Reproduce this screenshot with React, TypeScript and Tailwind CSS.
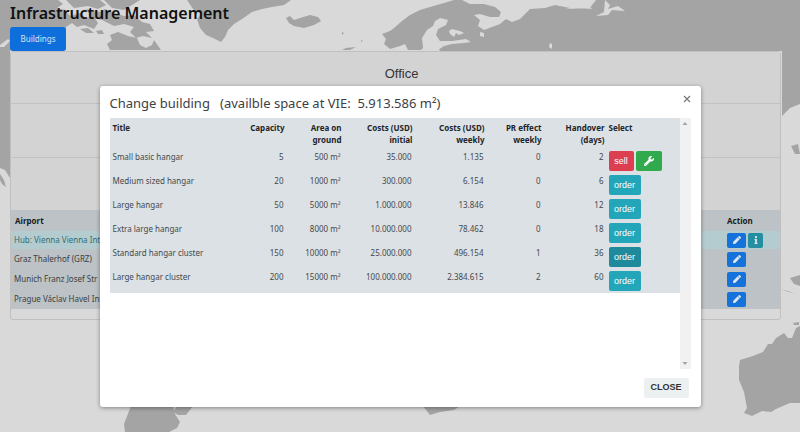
import type { ReactNode } from "react";

const airports = [
  { name: "Hub: Vienna Vienna Int", hub: true },
  { name: "Graz Thalerhof (GRZ)", hub: false },
  { name: "Munich Franz Josef Str", hub: false },
  { name: "Prague Václav Havel Int", hub: false },
];

const buildings = [
  { title: "Small basic hangar", capacity: "5", area: "500", initial: "35.000", weekly: "1.135", pr: "0", days: "2" },
  { title: "Medium sized hangar", capacity: "20", area: "1000", initial: "300.000", weekly: "6.154", pr: "0", days: "6" },
  { title: "Large hangar", capacity: "50", area: "5000", initial: "1.000.000", weekly: "13.846", pr: "0", days: "12" },
  { title: "Extra large hangar", capacity: "100", area: "8000", initial: "10.000.000", weekly: "78.462", pr: "0", days: "18" },
  { title: "Standard hangar cluster", capacity: "150", area: "10000", initial: "25.000.000", weekly: "496.154", pr: "1", days: "36" },
  { title: "Large hangar cluster", capacity: "200", area: "15000", initial: "100.000.000", weekly: "2.384.615", pr: "2", days: "60" },
];

const LAND = [
  // North America and the Arctic islands
  "M0 0H58L63 4L57 8L65 10L70 16L80 13L86 18L94 17L98 23L94 29L84 25L77 27L72 23L66 27V50H10V178L5 170L0 168Z",
  "M66 0H100L106 5L98 9L88 6L74 8Z",
  "M104 0H140L132 5L124 10L112 8Z",
  "M86 9L100 12L105 9L112 12L124 16L134 15L142 22L150 24L154 31L146 32L152 38L143 36L136 38L130 32L134 27L124 24L114 26L102 20L92 18Z",
  "M107 44L112 40L110 35L118 32L128 36L137 38L140 45L146 48L152 45L154 40L161 50H110Z",
  "M80 29L88 28L94 33L86 33Z",
  "M96 31L102 30L104 34L98 34Z",
  "M0 174L4 180L6 187L2 184L0 180Z",
  // Greenland
  "M187 0H291L284 5L272 7L262 9L252 12L242 19L234 24L228 30L225 37L221 42L213 38L206 35L200 28L197 19L201 14L193 9Z",
  // Iceland
  "M286 18L290 16L294 20L300 18L310 15L318 17L321 21L314 25L304 28L294 26L289 23Z",
  "M342 50L346 48L356 47L350 50Z",
  "M361 40L363 41L361 42Z",
  "M342 32L344 33L342 35Z",
  // Scandinavia and Russia
  "M382 34L390 31L394 28L402 21L410 15L420 10L430 7L444 3L454 0H462L470 4L484 4L495 7L501 12L499 17L490 17L480 14L474 15L480 20L478 26L484 30L492 27L500 24L506 19L512 22L520 19L530 9L545 8L555 5L570 8L566 9L590 8L592 5L596 0H800V104L790 108L782 116V51H440L437 46L426 45L421 50H408L405 44L400 46L390 49L384 44L386 39Z",
  // Southern Africa
  "M131 406L124 424L125 432H169L177 428L180 422L175 414L173 406Z",
  "M173 412L177 406H193L186 415L178 415Z",
  // South coast
  "M423 406L430 415L440 412L454 410L460 406Z",
  // Islands on the east edge
  "M791 146L798 144L800 154L795 154Z",
  "M790 278L800 275V286L794 284Z",
  "M793 323L799 322V325H794Z",
  "M780 289L788 291L795 294Z",
  // Australia
  "M739 366L740 360L753 356L763 352L768 344L772 344L776 338L784 333L788 338L792 338L796 328L800 326V403L790 403L776 409L771 412L762 411L752 416L744 413L747 408L744 392L739 380Z",
];

const WATER = [
  "M423 47L422 38L427 30L433 26L435 21L440 18L448 20L446 25L438 29L436 35L440 41L452 41L466 39L471 42L464 43L452 44L444 46L438 50H424Z",
  "M449 31L452 29L460 31L464 33L459 35L456 33L454 37L450 34Z",
  "M480 32L484 33L484 37L480 36Z",
  "M556 0L562 4L572 4L580 2L588 5L592 9L580 8L570 5Z",
  "M605 0L610 5L608 9L618 6L625 11L612 10L608 15L596 16L604 12Z",
  "M550 43L552 44L552 49L549 47Z",
  "M0 45L8 39L10 41L4 47H0Z",
];

function WorldMap() {
  return (
    <svg
      className="absolute inset-0 h-full w-full"
      viewBox="0 0 800 432"
      preserveAspectRatio="xMidYMid slice"
      aria-hidden="true"
    >
      <g fill="#a4a4a4">
        {LAND.map((d) => (
          <path key={d} d={d} />
        ))}
      </g>
      <g fill="#d9d9d9">
        {WATER.map((d) => (
          <path key={d} d={d} />
        ))}
      </g>
    </svg>
  );
}

function Pencil() {
  return (
    <svg viewBox="0 0 512 512" className="size-2" fill="currentColor" aria-hidden="true">
      <path d="M497.900 142.100l-46.100 46.100c-4.700 4.700-12.300 4.700-17 0l-111-111c-4.700-4.700-4.700-12.300 0-17l46.100-46.100c18.700-18.700 49.100-18.700 67.900 0l60.100 60.100c18.800 18.700 18.800 49.100 0 67.900zM284.200 99.800L21.600 362.400.4 483.900c-2.900 16.400 11.400 30.600 27.800 27.800l121.500-21.300 262.600-262.600c4.700-4.700 4.700-12.300 0-17l-111-111c-4.800-4.700-12.400-4.700-17.100 0z" />
    </svg>
  );
}

function Info() {
  return (
    <svg viewBox="0 0 192 512" className="h-2 w-1" fill="currentColor" aria-hidden="true">
      <path d="M20 424.229h20V279.771H20c-11.046 0-20-8.954-20-20V212c0-11.046 8.954-20 20-20h112c11.046 0 20 8.954 20 20v212.229h20c11.046 0 20 8.954 20 20V492c0 11.046-8.954 20-20 20H20c-11.046 0-20-8.954-20-20v-47.771c0-11.046 8.954-20 20-20zM96 0C56.235 0 24 32.235 24 72s32.235 72 72 72 72-32.235 72-72S135.764 0 96 0z" />
    </svg>
  );
}

function Wrench() {
  return (
    <svg viewBox="0 0 512 512" className="size-[10px]" fill="currentColor" aria-hidden="true">
      <path d="M507.730 109.100c-2.240-9.030-13.540-12.090-20.120-5.510l-74.360 74.360-67.880-11.310-11.310-67.880 74.360-74.360c6.620-6.620 3.430-17.900-5.660-20.160-47.380-11.740-99.550.91-136.580 37.930-39.640 39.640-50.550 97.100-34.050 147.200L18.740 402.760c-24.990 24.990-24.990 65.510 0 90.500 24.990 24.990 65.510 24.990 90.500 0l213.210-213.210c50.120 16.710 107.470 5.680 147.370-34.220 37.070-37.070 49.700-89.320 37.910-136.730zM64 472c-13.250 0-24-10.750-24-24 0-13.260 10.750-24 24-24s24 10.740 24 24c0 13.250-10.750 24-24 24z" />
    </svg>
  );
}

function Head({ children, className }: { children: ReactNode; className: string }) {
  return (
    <th scope="col" className={`pt-1 pr-[2px] align-top font-bold text-[#212529] ${className}`}>
      {children}
    </th>
  );
}

function BuildingTable() {
  const cell = "pt-[2px] pr-[3px] text-right align-top";
  return (
    <table className="w-full table-fixed border-collapse bg-[#dce1e5] text-[8px] leading-3 text-[#44494d]">
      <thead>
        <tr className="h-[31px]">
          <Head className="pl-[3px] text-left">Title</Head>
          <Head className="w-[45px] text-right">Capacity</Head>
          <Head className="w-[57px] text-right">
            Area on
            <br />
            ground
          </Head>
          <Head className="w-[71px] text-right">
            Costs (USD)
            <br />
            initial
          </Head>
          <Head className="w-[72px] text-right">
            Costs (USD)
            <br />
            weekly
          </Head>
          <Head className="w-[57px] text-right">
            PR effect
            <br />
            weekly
          </Head>
          <Head className="w-[63px] text-right">
            Handover
            <br />
            (days)
          </Head>
          <Head className="w-[73px] pl-[2px] text-left">Select</Head>
        </tr>
      </thead>
      <tbody>
        {buildings.map((b, i) => (
          <tr key={b.title} className="h-6">
            <td className="pt-[2px] pl-[3px] align-top">{b.title}</td>
            <td className={cell}>{b.capacity}</td>
            <td className={cell}>{b.area} m²</td>
            <td className={cell}>{b.initial}</td>
            <td className={cell}>{b.weekly}</td>
            <td className={cell}>{b.pr}</td>
            <td className={cell}>{b.days}</td>
            <td className="pt-[2px] pl-[2px] align-top">
              <div className="flex gap-[2px] font-['Liberation_Sans',sans-serif] text-[9px] text-white">
                {i === 0 ? (
                  <>
                    <button type="button" className="h-5 w-[25px] rounded-[2px] bg-[#dc3f50]">
                      sell
                    </button>
                    <button
                      type="button"
                      aria-label="Renovate"
                      className="flex h-5 w-[26px] items-center justify-center rounded-[2px] bg-[#30aa4c]"
                    >
                      <Wrench />
                    </button>
                  </>
                ) : (
                  <button
                    type="button"
                    className={`h-5 w-8 rounded-[2px] ${i === 4 ? "bg-[#1f8a9b]" : "bg-[#23a5ba]"}`}
                  >
                    order
                  </button>
                )}
              </div>
            </td>
          </tr>
        ))}
      </tbody>
    </table>
  );
}

function Dialog() {
  return (
    <div className="absolute inset-0 flex items-start justify-center pt-[86px]">
      <section
        role="dialog"
        aria-labelledby="dialog-title"
        className="w-full max-w-[601px] rounded-[3px] bg-white px-[10px] pt-2 pb-[9px] shadow-[0_1px_4px_rgba(0,0,0,0.4)]"
      >
        <header className="flex h-6 items-start justify-between">
          <h2 id="dialog-title" className="text-[13px] leading-[18px] whitespace-pre text-[#3d4145]">
            {"Change building   (availble space at VIE:  5.913.586 m²)"}
          </h2>
          <button type="button" aria-label="Close dialog" className="py-[1px] text-[#777]">
            <svg viewBox="0 0 8 8" className="size-2" stroke="currentColor" strokeWidth="1.2" aria-hidden="true">
              <path d="M1 1L7 7M7 1L1 7" />
            </svg>
          </button>
        </header>
        <div className="flex h-[251px]">
          <div className="min-w-0 flex-1 overflow-hidden">
            <BuildingTable />
          </div>
          <div className="flex w-[11px] flex-col items-center justify-between bg-[#f1f1f1] py-1" aria-hidden="true">
            <svg viewBox="0 0 6 4" className="h-1 w-[6px]" fill="#a3a3a3">
              <path d="M3 0L5.500 3H0.500Z" />
            </svg>
            <svg viewBox="0 0 6 4" className="h-1 w-[6px]" fill="#a3a3a3">
              <path d="M3 4L5.500 1H0.500Z" />
            </svg>
          </div>
        </div>
        <footer className="flex justify-end pt-[9px] pr-[2px]">
          <button
            type="button"
            className="h-5 w-[45px] rounded-[2px] bg-[#ecf0f1] font-['Liberation_Sans',sans-serif] text-[9px] font-bold text-[#333]"
          >
            CLOSE
          </button>
        </footer>
      </section>
    </div>
  );
}

export default function App() {
  return (
    <div className="relative min-h-screen overflow-hidden bg-[#d9d9d9] font-['Noto_Sans','Open_Sans',sans-serif] text-[#111]">
      <WorldMap />
      <main className="relative pr-[19px] pl-[10px]">
        <h1 className="h-[27px] text-[16px] leading-[27px] font-semibold">Infrastructure Management</h1>
        <nav className="flex">
          <button type="button" className="h-6 w-14 rounded-[3px] bg-[#0e6fdc] text-[8px] text-[#d8e5f4]">
            Buildings
          </button>
        </nav>
        <div className="rounded-[3px] border border-[#c0c0c0] bg-[#d9d9d9]">
          <div className="bg-[#d3d3d3]">
            <h2 className="h-[52px] border-b border-[#c2c2c2] pl-3 text-center font-['Liberation_Sans',sans-serif] text-[13px] leading-[44px] text-[#333]">
              Office
            </h2>
            <div className="h-[54px] border-b border-[#c2c2c2]" />
            <div className="h-[52px]" />
          </div>
          <table className="w-full table-fixed border-collapse bg-[#bcc2c5] text-[8px] leading-3 text-[#3b3f42]">
            <thead>
              <tr className="h-[21px] text-left text-[#191b1d]">
                <th scope="col" className="px-1 font-bold">Airport</th>
                <th scope="col" className="w-[53px] font-bold">Action</th>
              </tr>
            </thead>
            <tbody>
              {airports.map((a) => (
                <tr key={a.name} className={a.hub ? "h-[18px] bg-[#b4ccd0] text-[#316c70]" : "h-5"}>
                  <td className="px-[3px] whitespace-nowrap">{a.name}</td>
                  <td>
                    <div className="flex gap-[2px]">
                      <button
                        type="button"
                        aria-label="Edit"
                        className="flex h-[15px] w-[19px] items-center justify-center rounded-[2px] bg-[#1672db] text-[#e1e6ec]"
                      >
                        <Pencil />
                      </button>
                      {a.hub && (
                        <button
                          type="button"
                          aria-label="Details"
                          className="flex h-[15px] w-[15px] items-center justify-center rounded-[2px] bg-[#238fa0] text-[#e1e6ec]"
                        >
                          <Info />
                        </button>
                      )}
                    </div>
                  </td>
                </tr>
              ))}
            </tbody>
          </table>
          <div className="h-[10px]" />
        </div>
      </main>
      <Dialog />
    </div>
  );
}
